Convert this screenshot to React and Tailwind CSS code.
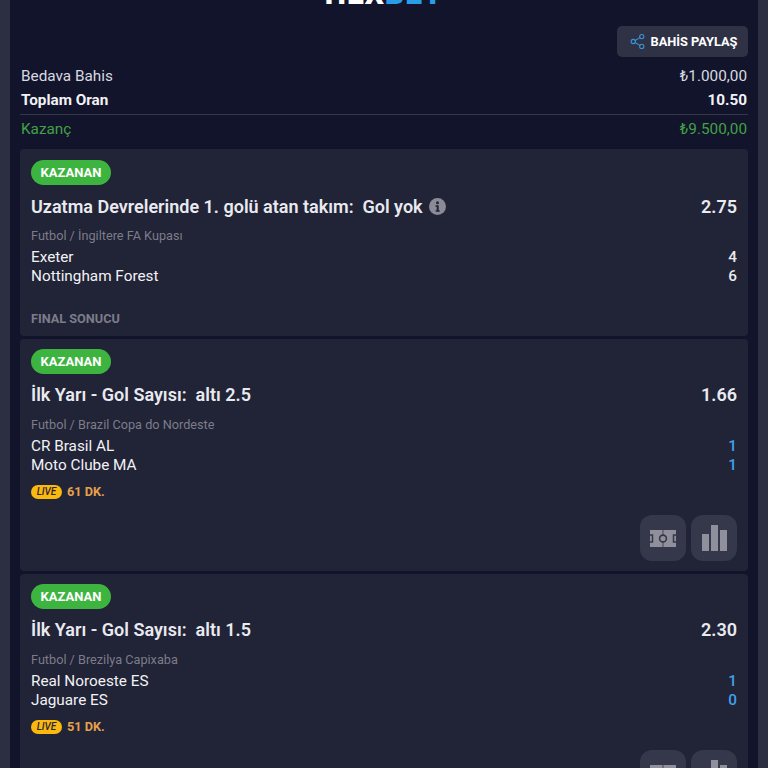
import { Share2 } from 'lucide-react';

const PitchIcon = () => (
  <svg width="26" height="17" viewBox="0 0 26 17">
    <rect width="26" height="17" fill="#8f909c" />
    <path d="M13 0v5M13 12v5" stroke="#35374a" strokeWidth="0.8" />
    <circle cx="13" cy="8.500" r="3.400" fill="none" stroke="#35374a" strokeWidth="1.600" />
    <path d="M0 5h2.500v7H0M26 5h-2.500v7H26" fill="none" stroke="#35374a" strokeWidth="1.500" />
  </svg>
);

const BarsIcon = () => (
  <svg width="25" height="26" viewBox="0 0 25 26" fill="#8f909c">
    <rect x="0" y="9" width="7" height="17" />
    <rect x="9" y="0" width="7" height="26" />
    <rect x="18" y="5" width="7" height="21" />
  </svg>
);

const InfoDot = () => (
  <svg width="17" height="17" viewBox="0 0 17 17">
    <circle cx="8.500" cy="8.500" r="8.500" fill="#8a8b97" />
    <circle cx="8.500" cy="4.800" r="1.500" fill="#212336" />
    <path d="M6.500 7.300h3.200v5h1v1.400H6.700v-1.400h1v-3.600h-1.200z" fill="#212336" />
  </svg>
);

function BetCard({ title, info, odd, league, teams, live, footer, actions, className, titleClass }) {
  return (
    <div className={`bg-[#212336] rounded-[4px] px-[11px] flex flex-col ${className}`}>
      <div className="self-start bg-[#3db43f] text-white text-[13px] font-bold rounded-full h-[25px] w-[80px] flex items-center justify-center">KAZANAN</div>
      <div className={`flex justify-between items-center h-[24px] text-[#e9eaf0] text-[18px] font-semibold ${titleClass}`}>
        <div className="flex items-center gap-[6px] whitespace-pre">
          <span>{title}</span>
          {info && <InfoDot />}
        </div>
        <span>{odd}</span>
      </div>
      <div className="text-[12.7px] leading-[16px] text-[#7c7d8a]">{league}</div>
      <div className="mt-[4px] text-[15.3px] leading-[19px] text-[#f2f2f5]">
        {teams.map((t) => (
          <div key={t.name} className="flex justify-between">
            <span>{t.name}</span>
            <span className={`font-medium ${t.blue ? 'text-[#3fa2ea]' : 'text-[#e9eaf0]'}`}>{t.score}</span>
          </div>
        ))}
      </div>
      {live && (
        <div className="mt-[7px] flex items-center gap-[5px]">
          <span className="bg-[#fbb80f] text-[#2a2434] text-[10px] italic font-medium rounded-full w-[31px] h-[14px] flex items-center justify-center">LIVE</span>
          <span className="text-[12.7px] font-bold text-[#e5a14c]">{live}</span>
        </div>
      )}
      {footer && <div className="mt-[25px] text-[12.7px] leading-[16px] font-bold text-[#7c7d8a]">{footer}</div>}
      {actions && (
        <div className="mt-auto flex justify-end gap-[5px]">
          <div className="w-[46px] h-[46px] rounded-[12px] bg-[#35374a] flex items-center justify-center"><PitchIcon /></div>
          <div className="w-[46px] h-[46px] rounded-[12px] bg-[#35374a] flex items-center justify-center"><BarsIcon /></div>
        </div>
      )}
    </div>
  );
}

export default function App() {
  return (
    <div className="h-[768px] overflow-hidden bg-[#2c2f42] px-[10px]" style={{ fontFamily: 'Roboto, "Noto Sans", sans-serif' }}>
      <div className="bg-[#11142a] h-full px-[10px] overflow-hidden">
        <div className="h-[26px] overflow-hidden relative">
          <div className="absolute left-0 right-0 top-[-18px] text-center text-[30px] leading-[24px] font-black tracking-[1px]">
            <span className="text-white">HEX</span><span className="text-[#2a9de8]">BET</span>
          </div>
        </div>
        <div className="flex justify-end">
          <div className="w-[131px] h-[31px] bg-[#2f3245] rounded-[5px] pl-[2px] flex items-center justify-center gap-[4px] text-white text-[12.8px] font-bold">
            <Share2 size={17} className="text-[#3b93d8]" strokeWidth={1.5} />
            <span>BAHİS PAYLAŞ</span>
          </div>
        </div>
        <div className="mt-[8px] px-[1px] flex justify-between text-[15.3px] leading-[23px] text-[#d9dae0]">
          <span>Bedava Bahis</span><span>₺1.000,00</span>
        </div>
        <div className="px-[1px] flex justify-between text-[15.3px] leading-[24px] font-bold text-[#f2f2f5]">
          <span>Toplam Oran</span><span>10.50</span>
        </div>
        <div className="mt-[2px] pt-[3px] border-t border-[#34374a] px-[1px] flex justify-between text-[15.3px] leading-[23px] text-[#43a047]">
          <span>Kazanç</span><span>₺9.500,00</span>
        </div>
        <div className="mt-[8px] flex flex-col gap-[3px]">
          <BetCard
            className="h-[187px] pt-[11px]"
            titleClass="mt-[9px] mb-[10px]"
            title="Uzatma Devrelerinde 1. golü atan takım:  Gol yok"
            info
            odd="2.75"
            league="Futbol / İngiltere FA Kupası"
            teams={[{ name: 'Exeter', score: '4' }, { name: 'Nottingham Forest', score: '6' }]}
            footer="FINAL SONUCU"
          />
          <BetCard
            className="h-[232px] pt-[10px] pb-[10px]"
            titleClass="mt-[8px] mb-[11px]"
            title="İlk Yarı - Gol Sayısı:  altı 2.5"
            odd="1.66"
            league="Futbol / Brazil Copa do Nordeste"
            teams={[{ name: 'CR Brasil AL', score: '1', blue: true }, { name: 'Moto Clube MA', score: '1', blue: true }]}
            live="61 DK."
            actions
          />
          <BetCard
            className="h-[232px] pt-[10px] pb-[10px]"
            titleClass="mt-[8px] mb-[11px]"
            title="İlk Yarı - Gol Sayısı:  altı 1.5"
            odd="2.30"
            league="Futbol / Brezilya Capixaba"
            teams={[{ name: 'Real Noroeste ES', score: '1', blue: true }, { name: 'Jaguare ES', score: '0', blue: true }]}
            live="51 DK."
            actions
          />
        </div>
      </div>
    </div>
  );
}
